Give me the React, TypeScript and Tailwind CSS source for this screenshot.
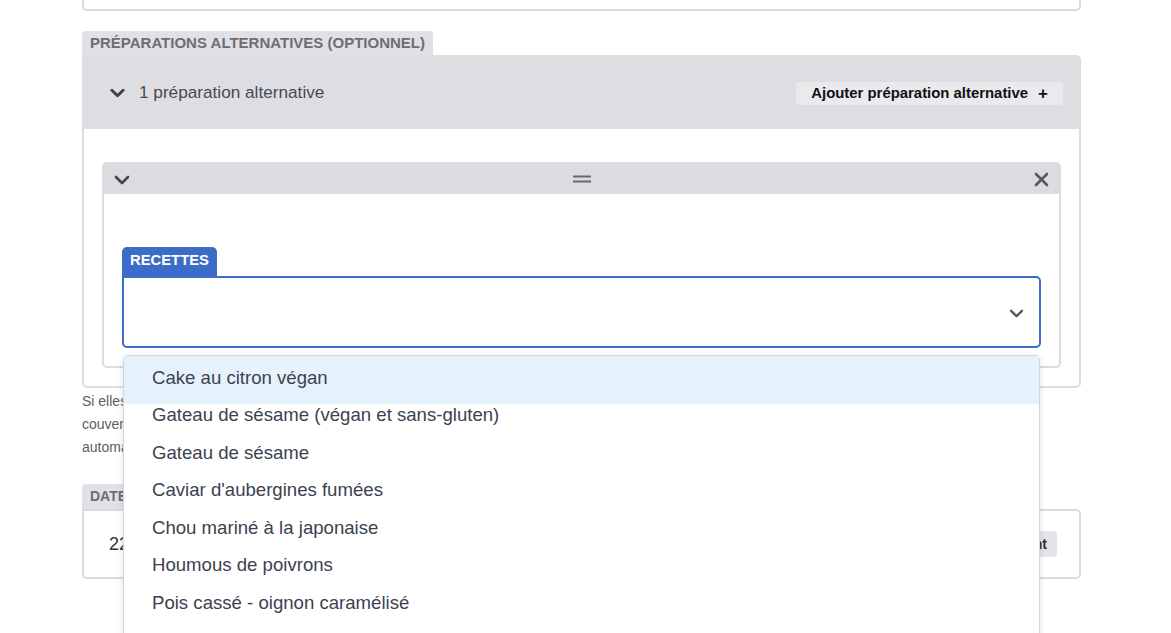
import React from 'react'

const Chevron = ({ className = '', w = 15, h = 10, stroke = 3 }: { className?: string; w?: number; h?: number; stroke?: number }) => (
  <svg width={w} height={h} viewBox="0 0 16 10" className={className} fill="none">
    <polyline points="2,2 8,8 14,2" stroke="currentColor" strokeWidth={stroke} strokeLinecap="round" strokeLinejoin="round" />
  </svg>
)

const Cross = () => (
  <svg width="15" height="15" viewBox="0 0 15 15" className="text-[#55585f]">
    <path d="M2 2 L13 13 M13 2 L2 13" stroke="currentColor" strokeWidth="2.6" strokeLinecap="round" />
  </svg>
)

const Handle = () => (
  <svg width="18" height="8" viewBox="0 0 18 8" className="text-[#66696f]">
    <path d="M0 1.5 H18 M0 6.5 H18" stroke="currentColor" strokeWidth="2" />
  </svg>
)

const recettes = [
  'Cake au citron végan',
  'Gateau de sésame (végan et sans-gluten)',
  'Gateau de sésame',
  "Caviar d'aubergines fumées",
  'Chou mariné à la japonaise',
  'Houmous de poivrons',
  'Pois cassé - oignon caramélisé',
]

const App = () => {
  return (
    <div className="h-[633px] overflow-hidden bg-white font-['Liberation_Sans',Arial,sans-serif]">
      <div className="ml-[82px] w-[999px]">

        {/* bottom of previous card */}
        <div className="h-[11px] border-2 border-t-0 border-[#dadade] rounded-b-[5px]" />

        <section className="mt-[20px]">
          <div className="inline-block h-[24px] px-[8px] bg-[#e1e1e5] rounded-t-[4px] text-[15px] leading-[24px] font-bold text-[#6b6e77] uppercase">
            Préparations alternatives (optionnel)
          </div>
          <div className="border-2 border-[#dedee2] rounded-b-[5px] rounded-tr-[5px]">
            <div className="h-[72px] bg-[#dedee2] flex items-center justify-between pl-[26px] pr-[16px]">
              <div className="flex items-center gap-[14px] text-[#464a55]">
                <Chevron className="text-[#3b3f48]" />
                <span className="text-[17.2px]">1 préparation alternative</span>
              </div>
              <button className="h-[23px] px-[15px] bg-[#eaeaee] rounded-[3px] flex items-center gap-[10px] text-[14.9px] font-bold text-[#111]">
                Ajouter préparation alternative
                <span className="text-[17px] leading-none">+</span>
              </button>
            </div>

            <div className="pt-[33px] px-[18px] pb-[18px]">
              <div className="border-2 border-[#dcdce0] rounded-[5px]">
                <div className="h-[30px] bg-[#dcdce0] flex items-center justify-between pl-[10px] pr-[10px]">
                  <Chevron className="text-[#43464e] mt-[2px]" w={16} h={10} stroke={2.6} />
                  <Handle />
                  <Cross />
                </div>
                <div className="pt-[53px] px-[18px] pb-[18px]">
                  <div className="inline-block h-[29px] px-[8px] bg-[#3b6cc7] rounded-t-[5px] text-[14.8px] leading-[27px] font-bold text-white uppercase">
                    Recettes
                  </div>
                  <div className="relative h-[72px] border-2 border-[#3b6cc7] rounded-[5px] rounded-tl-none flex items-center justify-end pr-[15px]">
                    <Chevron className="text-[#55585f] mt-[2px]" w={15} h={9} stroke={2.6} />

                    <ul className="absolute left-[-1px] top-[77px] w-[917px] z-10 pb-[40px] bg-white border border-[#d6d6da] rounded-t-[4px] shadow-[0_2px_6px_rgba(0,0,0,0.12)] text-[18.6px] leading-[22px] text-[#3c4250]">
                      {recettes.map((r, i) => (
                        <li
                          key={r}
                          className={
                            i === 0
                              ? 'h-[48px] pt-[11px] pl-[28px] bg-[#e6f2fb]'
                              : 'h-[37.5px] pl-[28px]'
                          }
                        >
                          {r}
                        </li>
                      ))}
                    </ul>
                  </div>
                </div>
              </div>
            </div>
          </div>
        </section>

        <p className="mt-[2px] text-[14px] leading-[23px] text-[#5b5e66]">
          Si elles sont renseignées, les préparations alternatives seront proposées aux convives qui en feront la demande lors de leur réservation.<br />
          couverts réservés pour chaque préparation alternative seront déduits du nombre total de couverts de la recette principale, et la<br />
          automatiquement à jour dans le récapitulatif de production.
        </p>

        <section className="mt-[25px]">
          <div className="inline-block h-[25px] px-[8px] bg-[#e1e1e5] rounded-t-[4px] text-[14px] leading-[25px] font-bold text-[#6b6e77] uppercase">
            Date de service
          </div>
          <div className="h-[70px] border-2 border-[#dadade] rounded-b-[5px] rounded-tr-[5px] flex items-center justify-between pl-[25px] pr-[22px]">
            <span className="text-[18px] text-[#333]">22/03/2024</span>
            <span className="h-[26px] px-[10px] bg-[#e4e4e8] rounded-[3px] text-[14px] leading-[26px] font-bold text-[#333]">Maintenant</span>
          </div>
        </section>

      </div>
    </div>
  )
}

export default App
